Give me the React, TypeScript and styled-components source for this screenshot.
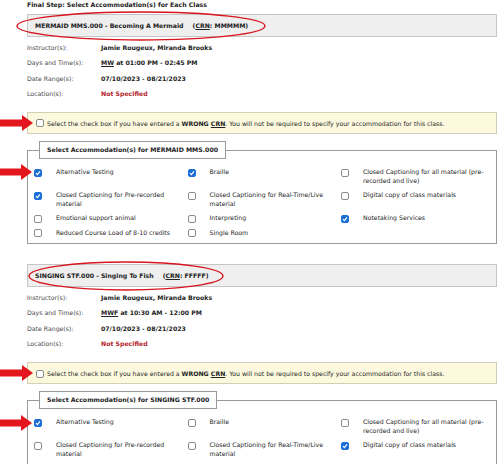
import React from 'react'
import styled, { createGlobalStyle } from 'styled-components'

const GlobalStyle = createGlobalStyle`
  html, body {
    margin: 0;
    padding: 0;
    overflow: hidden;
    background: #ffffff;
  }
  body {
    font-family: "DejaVu Sans", Verdana, sans-serif;
    font-size: 6.2px;
    color: #262626;
  }
`

type Item = { label: string; checked?: boolean; pointed?: boolean }

type ClassInfo = {
  code: string
  title: string
  crn: string
  days: string
  time: string
  ring: number
  items: Item[]
}

const classes: ClassInfo[] = [
  {
    code: 'MERMAID MMS.000',
    title: 'Becoming A Mermaid',
    crn: 'MMMMM',
    days: 'MW',
    time: 'at 01:00 PM - 02:45 PM',
    ring: 250,
    items: [
      { label: 'Alternative Testing', checked: true, pointed: true },
      { label: 'Braille', checked: true },
      { label: 'Closed Captioning for all material (pre-recorded and live)' },
      { label: 'Closed Captioning for Pre-recorded material', checked: true },
      { label: 'Closed Captioning for Real-Time/Live material' },
      { label: 'Digital copy of class materials' },
      { label: 'Emotional support animal' },
      { label: 'Interpreting' },
      { label: 'Notetaking Services', checked: true },
      { label: 'Reduced Course Load of 8-10 credits' },
      { label: 'Single Room' },
    ],
  },
  {
    code: 'SINGING STF.000',
    title: 'Singing To Fish',
    crn: 'FFFFF',
    days: 'MWF',
    time: 'at 10:30 AM - 12:00 PM',
    ring: 196,
    items: [
      { label: 'Alternative Testing', checked: true, pointed: true },
      { label: 'Braille' },
      { label: 'Closed Captioning for all material (pre-recorded and live)' },
      { label: 'Closed Captioning for Pre-recorded material' },
      { label: 'Closed Captioning for Real-Time/Live material' },
      { label: 'Digital copy of class materials', checked: true },
      { label: 'Emotional support animal' },
      { label: 'Interpreting' },
      { label: 'Notetaking Services' },
      { label: 'Reduced Course Load of 8-10 credits' },
      { label: 'Single Room' },
    ],
  },
]

const Page = styled.div`
  width: 470px;
  margin-left: 27px;
`

const Title = styled.div`
  font-weight: bold;
  line-height: 8px;
  padding-top: 1px;
  margin-bottom: 5px;
  color: #222;
`

const Section = styled.section`
  margin-bottom: 20px;
`

const Header = styled.div`
  position: relative;
  box-sizing: border-box;
  height: 23px;
  display: flex;
  align-items: center;
  padding-left: 7px;
  background: #efefef;
  border: 1px solid #c6c6c6;
  font-weight: bold;
  color: #222;
`

const Crn = styled.span`
  margin-left: 9px;
`

const Ring = styled.svg<{ $w: number }>`
  position: absolute;
  top: -4px;
  left: ${p => (p.$w > 220 ? -12 : 0)}px;
  width: ${p => p.$w}px;
  height: 30px;
  overflow: visible;
  pointer-events: none;
`

const Info = styled.div`
  display: grid;
  grid-template-columns: 74px 1fr;
  margin-top: 3px;
  line-height: 15.3px;
`

const Label = styled.div`
  color: #4a4a4a;
`

const Value = styled.div<{ $warn?: boolean }>`
  font-weight: bold;
  color: ${p => (p.$warn ? '#b3262c' : '#222')};
`

const Notice = styled.div`
  position: relative;
  box-sizing: border-box;
  height: 22px;
  margin-top: 11px;
  display: flex;
  align-items: center;
  gap: 3px;
  padding-left: 8px;
  background: #fcf9de;
  border: 1px solid #d2cfb4;
`

const Fieldset = styled.fieldset`
  margin: 7px 0 0 0;
  padding: 6px 6px 3px 6px;
  border: 1px solid #9a9a9a;
  min-width: 0;
`

const Legend = styled.legend`
  margin-left: 5px;
  padding: 0 7px;
  line-height: 16px;
  border: 1px solid #9a9a9a;
  background: #fff;
  font-weight: bold;
  color: #222;
`

const Grid = styled.div`
  display: grid;
  grid-template-columns: repeat(3, 153.5px);
  align-items: start;
`

const Cell = styled.div`
  position: relative;
  display: flex;
  align-items: flex-start;
  gap: 14px;
  padding: 3px 0;
  line-height: 8.5px;
`

const CellText = styled.span`
  flex: 1;
  padding-right: 6px;
`

const Box = styled.span<{ $checked?: boolean }>`
  flex: none;
  box-sizing: border-box;
  width: 8px;
  height: 8px;
  margin-top: 0.5px;
  border-radius: 2px;
  border: 1px solid ${p => (p.$checked ? '#1b6fd6' : '#8c8c8c')};
  background: ${p => (p.$checked ? '#1b6fd6' : '#fff')};
  display: flex;
  align-items: center;
  justify-content: center;
  svg {
    width: 6px;
    height: 6px;
  }
`

const Arrow = styled.svg<{ $left: number }>`
  position: absolute;
  left: ${p => p.$left}px;
  top: 50%;
  width: 33px;
  height: 16px;
  margin-top: -8px;
  pointer-events: none;
`

const CellArrow = styled(Arrow)`
  top: 7.25px;
`

function Check({ checked }: { checked?: boolean }) {
  return (
    <Box $checked={checked}>
      {checked && (
        <svg viewBox="0 0 6 6">
          <path d="M1 3.2 L2.4 4.6 L5 1.4" fill="none" stroke="#fff" strokeWidth="1.2" />
        </svg>
      )}
    </Box>
  )
}

function RedArrow({ left, inCell }: { left: number; inCell?: boolean }) {
  const Comp = inCell ? CellArrow : Arrow
  return (
    <Comp $left={left} viewBox="0 0 33 16">
      <polygon points="0,4.5 22,4.5 22,0 33,8 22,16 22,11.5 0,11.5" fill="#e3161d" />
    </Comp>
  )
}

function ClassBlock({ info }: { info: ClassInfo }) {
  return (
    <Section>
      <Header>
        {info.code} - {info.title}
        <Crn>
          (<u>CRN</u>: {info.crn})
        </Crn>
        <Ring $w={info.ring} viewBox={`0 0 ${info.ring} 30`}>
          <ellipse
            cx={info.ring / 2}
            cy={15}
            rx={info.ring / 2 - 1}
            ry={14}
            fill="none"
            stroke="#d8141c"
            strokeWidth="1.4"
          />
        </Ring>
      </Header>
      <Info>
        <Label>Instructor(s):</Label>
        <Value>Jamie Rougeux, Miranda Brooks</Value>
        <Label>Days and Time(s):</Label>
        <Value>
          <u>{info.days}</u> {info.time}
        </Value>
        <Label>Date Range(s):</Label>
        <Value>07/10/2023 - 08/21/2023</Value>
        <Label>Location(s):</Label>
        <Value $warn>Not Specified</Value>
      </Info>
      <Notice>
        <RedArrow left={-28} />
        <Check />
        <span>
          Select the check box if you have entered a <b>WRONG <u>CRN</u></b>. You will not be required to
          specify your accommodation for this class.
        </span>
      </Notice>
      <Fieldset>
        <Legend>Select Accommodation(s) for {info.code}</Legend>
        <Grid>
          {info.items.map((it, i) => (
            <Cell key={i}>
              {it.pointed && <RedArrow left={-35} inCell />}
              <Check checked={it.checked} />
              <CellText>{it.label}</CellText>
            </Cell>
          ))}
        </Grid>
      </Fieldset>
    </Section>
  )
}

export default function App() {
  return (
    <>
      <GlobalStyle />
      <Page>
        <Title>Final Step: Select Accommodation(s) for Each Class</Title>
        {classes.map(c => (
          <ClassBlock key={c.code} info={c} />
        ))}
      </Page>
    </>
  )
}
